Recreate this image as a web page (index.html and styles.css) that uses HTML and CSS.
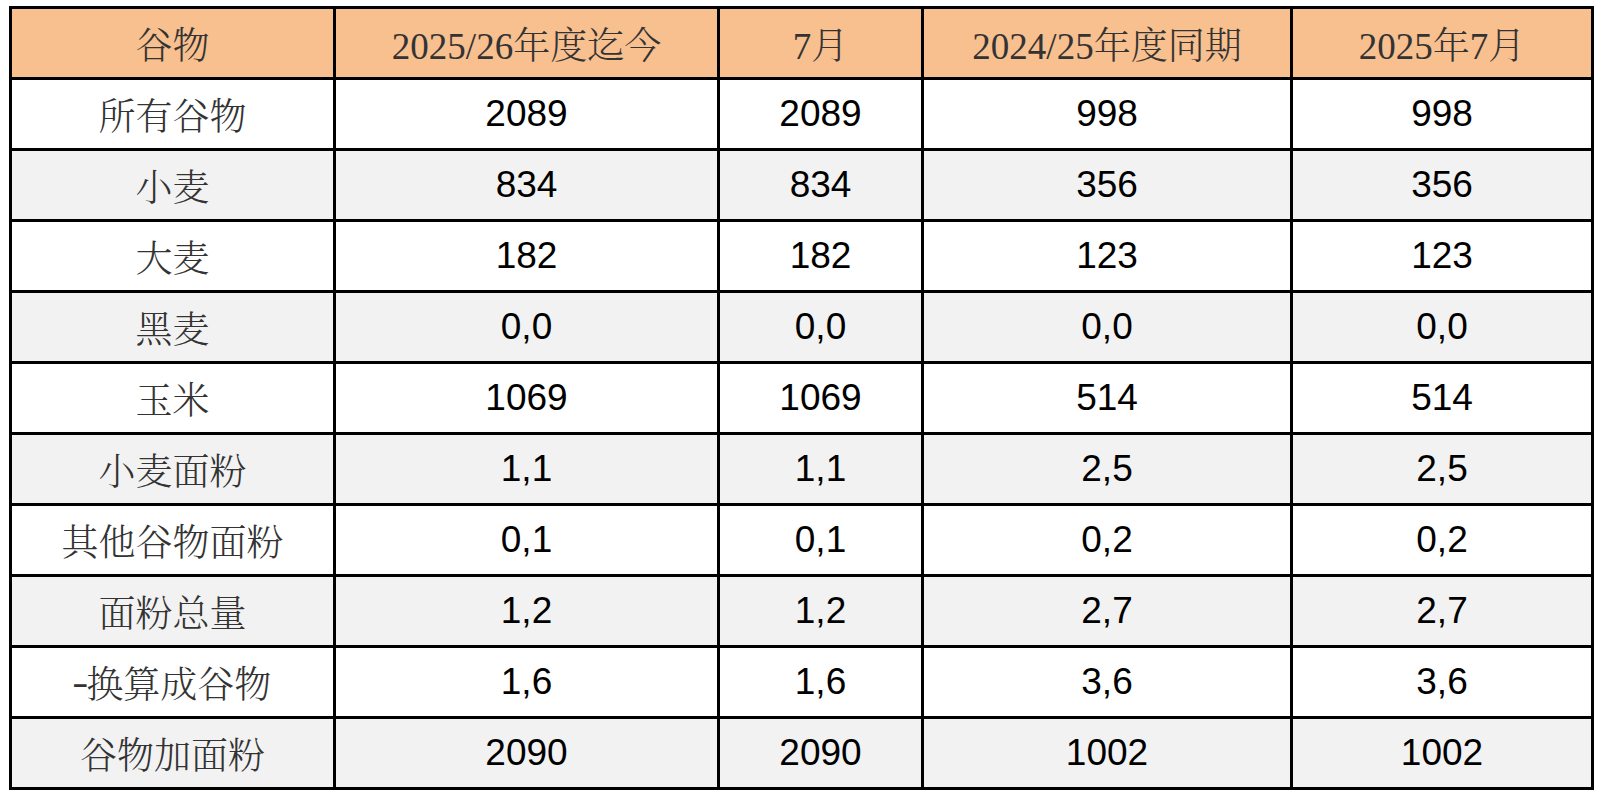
FILE: index.html
```html
<!DOCTYPE html>
<html lang="zh">
<head>
<meta charset="utf-8">
<title>谷物</title>
<link rel="stylesheet" href="styles.css">
</head>
<body>
<div class="grid">
  <div class="cell head">谷物</div>
  <div class="cell head">2025/26年度迄今</div>
  <div class="cell head">7月</div>
  <div class="cell head">2024/25年度同期</div>
  <div class="cell head">2025年7月</div>

  <div class="cell name">所有谷物</div><div class="cell num">2089</div><div class="cell num">2089</div><div class="cell num">998</div><div class="cell num">998</div>
  <div class="cell name alt">小麦</div><div class="cell num alt">834</div><div class="cell num alt">834</div><div class="cell num alt">356</div><div class="cell num alt">356</div>
  <div class="cell name">大麦</div><div class="cell num">182</div><div class="cell num">182</div><div class="cell num">123</div><div class="cell num">123</div>
  <div class="cell name alt">黑麦</div><div class="cell num alt">0,0</div><div class="cell num alt">0,0</div><div class="cell num alt">0,0</div><div class="cell num alt">0,0</div>
  <div class="cell name">玉米</div><div class="cell num">1069</div><div class="cell num">1069</div><div class="cell num">514</div><div class="cell num">514</div>
  <div class="cell name alt">小麦面粉</div><div class="cell num alt">1,1</div><div class="cell num alt">1,1</div><div class="cell num alt">2,5</div><div class="cell num alt">2,5</div>
  <div class="cell name">其他谷物面粉</div><div class="cell num">0,1</div><div class="cell num">0,1</div><div class="cell num">0,2</div><div class="cell num">0,2</div>
  <div class="cell name alt">面粉总量</div><div class="cell num alt">1,2</div><div class="cell num alt">1,2</div><div class="cell num alt">2,7</div><div class="cell num alt">2,7</div>
  <div class="cell name"><span class="dash">-</span>换算成谷物</div><div class="cell num">1,6</div><div class="cell num">1,6</div><div class="cell num">3,6</div><div class="cell num">3,6</div>
  <div class="cell name alt">谷物加面粉</div><div class="cell num alt">2090</div><div class="cell num alt">2090</div><div class="cell num alt">1002</div><div class="cell num alt">1002</div>
</div>
</body>
</html>
```
FILE: styles.css
```css
html, body {
  margin: 0;
  padding: 0;
  background: #ffffff;
}

.grid {
  display: grid;
  grid-template-columns: 324px 384px 204px 369px 301px;
  grid-auto-rows: 71px;
  width: max-content;
  margin: 6px 0 0 9px;
  border-top: 3px solid #000;
  border-left: 3px solid #000;
}

.cell {
  box-sizing: border-box;
  border-right: 3px solid #000;
  border-bottom: 3px solid #000;
  display: flex;
  align-items: center;
  justify-content: center;
  font-size: 37px;
  white-space: nowrap;
  background: #ffffff;
}

.head {
  background: #f8bf8f;
  color: #333333;
  font-weight: 300;
  font-family: "Liberation Serif", "Noto Serif CJK SC", "Noto Sans CJK SC", serif;
}

.name {
  color: #333333;
  font-weight: 300;
  font-family: "Liberation Serif", "Noto Serif CJK SC", "Noto Sans CJK SC", serif;
}

.dash {
  display: inline-block;
  transform: scaleX(1.3);
  font-weight: 300;
}

.num {
  color: #000000;
  font-family: "Liberation Sans", Arial, sans-serif;
}

.alt {
  background: #f2f2f2;
}
```
